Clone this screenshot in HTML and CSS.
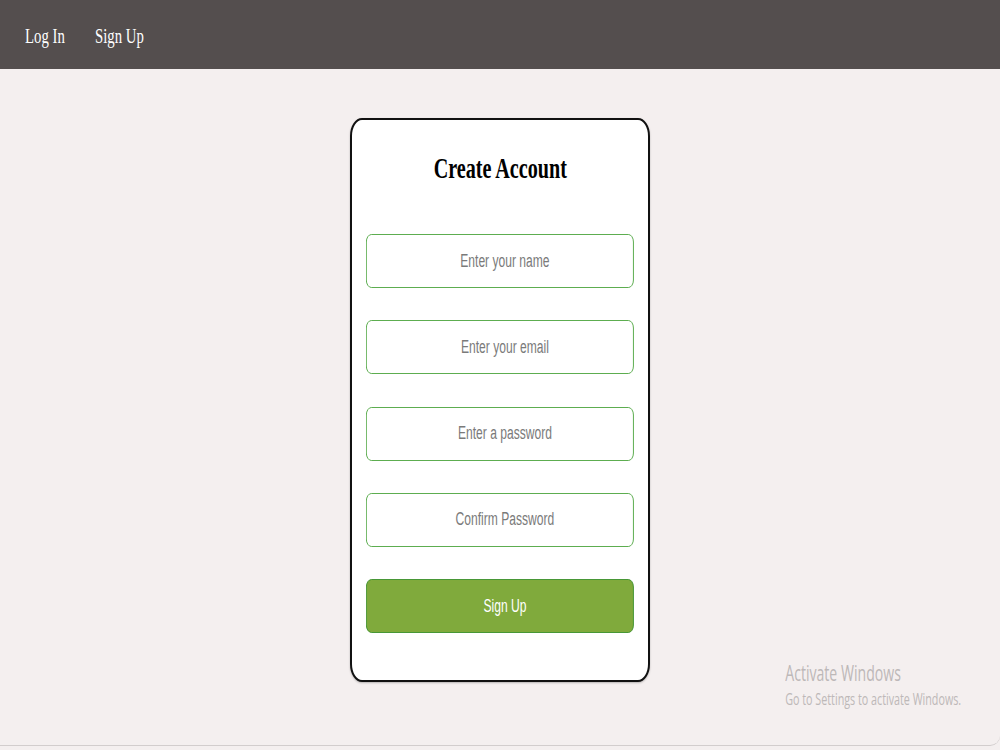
FILE: index.html
```html
<!DOCTYPE html>
<html lang="en">
<head>
  <meta charset="UTF-8">
  <title>Create Account</title>
  <link rel="stylesheet" href="styles.css">
</head>
<body>
  <nav class="navbar">
    <a href="#" class="nav-link"><span class="narrow">Log In</span></a>
    <a href="#" class="nav-link"><span class="narrow">Sign Up</span></a>
  </nav>
  <main class="content">
    <form class="card" onsubmit="return false;">
      <h2><span class="narrow">Create Account</span></h2>
      <div class="fields">
        <input class="control" type="text" placeholder="Enter your name">
        <input class="control" type="email" placeholder="Enter your email">
        <input class="control" type="password" placeholder="Enter a password">
        <input class="control" type="password" placeholder="Confirm Password">
        <button class="control" type="submit">Sign Up</button>
      </div>
    </form>
  </main>
  <div class="watermark">
    <div class="wm-title">Activate Windows</div>
    <div class="wm-sub">Go to Settings to activate Windows.</div>
  </div>
</body>
</html>
```

FILE: styles.css
```css
html, body {
  margin: 0;
  padding: 0;
  overflow: hidden;
}
body {
  height: 745px;
  background: #f4efef;
  border-bottom: 1px solid #d2cdcd;
  border-bottom-right-radius: 10px;
  position: relative;
}
/* condensed lettering */
.narrow {
  display: inline-block;
  transform: scaleX(0.6711);
}
.navbar {
  height: 69px;
  background: #544e4e;
  display: flex;
  align-items: center;
  padding-left: 25px;
  gap: 11px;
}
.nav-link {
  font-family: "Liberation Serif", "Times New Roman", serif;
  font-size: 22px;
  color: #ffffff;
  text-decoration: none;
  margin-top: 2px;
}
.nav-link .narrow { transform-origin: 0 50%; }
.content {
  display: flex;
  justify-content: center;
  padding-top: 49px;
}
.card {
  width: 300px;
  height: 564px;
  box-sizing: border-box;
  background: #ffffff;
  border: 2px solid #111111;
  border-radius: 12px / 18px;
  padding: 30px 14px 0;
  box-shadow: 0 1px 2px rgba(0,0,0,0.25);
}
.card h2 {
  margin: 0 0 48px;
  text-align: center;
  font-family: "Liberation Serif", "Times New Roman", serif;
  font-size: 30px;
  line-height: 36px;
  font-weight: bold;
  color: #000000;
  white-space: nowrap;
}
.fields {
  display: flex;
  flex-direction: column;
  align-items: flex-start;
  gap: 32.3px;
}
/* inputs are drawn wide and squeezed so the lettering stays narrow */
.control {
  width: 399px;
  height: 54px;
  margin-right: -132px;
  box-sizing: border-box;
  border-radius: 8px;
  padding: 0 0 0 15px;
  font-family: "Liberation Sans", Arial, sans-serif;
  font-size: 18px;
  text-align: center;
  transform: scaleX(0.6711);
  transform-origin: 0 0;
}
input.control {
  border: 1px solid #3c9c2c;
  background: #ffffff;
  outline: none;
}
input.control::placeholder { color: #7a7a7a; }
button.control {
  border: 1px solid #2f8a22;
  background: #80aa3c;
  color: #ffffff;
  cursor: pointer;
}
button.control:hover { background: #73993a; }
.watermark {
  position: absolute;
  right: 39px;
  top: 660px;
  font-family: "Open Sans", "Noto Sans", sans-serif;
  color: #bdb8b8;
  white-space: nowrap;
  transform: scaleX(0.6711);
  transform-origin: 100% 0;
}
.wm-title {
  font-size: 21px;
  line-height: 26px;
  margin-left: 3px;
}
.wm-sub {
  font-size: 16px;
  line-height: 20px;
  margin-top: 3px;
  margin-left: 3px;
}
```
